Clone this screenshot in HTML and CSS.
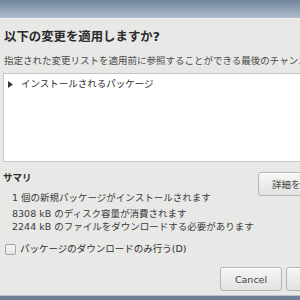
FILE: index.html
```html
<!DOCTYPE html>
<html lang="ja">
<head>
<meta charset="utf-8">
<link rel="stylesheet" href="styles.css">
</head>
<body>
<div class="titlebar"></div>
<div class="dialog">
  <h1 class="title">以下の変更を適用しますか?</h1>
  <p class="subtitle">指定された変更リストを適用前に参照することができる最後のチャンスです。</p>
  <div class="listbox">
    <div class="item">
      <svg class="expander" width="5" height="7" viewBox="0 0 5 7"><polygon points="0,0 5,3.5 0,7" fill="#3a3a3a"/></svg>
      <span>インストールされるパッケージ</span>
    </div>
  </div>
  <div class="summary">
    <div class="summary-text">
      <div class="heading">サマリ</div>
      <div class="line first">1 個の新規パッケージがインストールされます</div>
      <div class="line">8308 kB のディスク容量が消費されます</div>
      <div class="line">2244 kB のファイルをダウンロードする必要があります</div>
    </div>
    <button class="btn details">詳細を表示</button>
  </div>
  <label class="check"><span class="box"></span><span>パッケージのダウンロードのみ行う(D)</span></label>
  <div class="actions">
    <button class="btn">Cancel</button>
    <button class="btn">Apply</button>
  </div>
</div>
<div class="bottombar"></div>
</body>
</html>
```
FILE: styles.css
```css
html, body {
  margin: 0;
  padding: 0;
}
body {
  width: 300px;
  height: 300px;
  overflow: hidden;
  background: #e8e8e7;
  font-family: "DejaVu Sans", "Noto Sans CJK JP", sans-serif;
  color: #2e3436;
  display: flex;
  flex-direction: column;
}
.titlebar {
  height: 18px;
  flex: none;
  background: linear-gradient(#71849f, #b0bccd);
  border-bottom: 1px solid #f2f3f5;
}
.dialog {
  flex: 1;
  width: 345px;
  padding: 0 10px 0 3px;
  display: flex;
  flex-direction: column;
}
.title {
  margin: 10px 0 0 1px;
  font-size: 12.4px;
  line-height: 16px;
  font-weight: bold;
  color: #2c2c2c;
  white-space: nowrap;
}
.subtitle {
  margin: 9px 0 0 1px;
  font-size: 9.5px;
  line-height: 14px;
  color: #4a4a4a;
  white-space: nowrap;
}
.listbox {
  margin-top: 5px;
  height: 87px;
  background: #fff;
  border: 1px solid #c6c6c4;
}
.item {
  display: flex;
  align-items: center;
  gap: 8px;
  padding: 3px 0 0 4px;
  font-size: 9.5px;
  line-height: 14px;
  color: #2c2c2c;
}
.summary {
  display: flex;
  justify-content: space-between;
  align-items: flex-start;
  margin-top: 9px;
}
.heading {
  font-size: 9.5px;
  line-height: 14px;
  font-weight: bold;
  color: #2c2c2c;
}
.line {
  margin-left: 9px;
  font-size: 9.5px;
  line-height: 13px;
  color: #3a3a3a;
  white-space: nowrap;
}
.line.first {
  margin-top: 6px;
  margin-bottom: 3px;
}
.btn {
  font-family: "DejaVu Sans", "Noto Sans CJK JP", sans-serif;
  font-size: 9.5px;
  color: #444;
  height: 24px;
  padding: 0 12px;
  background: linear-gradient(#f6f6f5, #e2e2e0);
  border: 1px solid #b4b4b2;
  border-radius: 3px;
  box-shadow: inset 0 1px 0 #fff;
}
.details {
  margin-top: 1px;
  width: 90px;
  padding: 0 0 0 13px;
  text-align: left;
  white-space: nowrap;
}
.check {
  display: flex;
  align-items: center;
  gap: 4px;
  margin: 9px 0 0 2px;
  font-size: 9.5px;
  line-height: 14px;
  color: #2c2c2c;
}
.box {
  width: 9px;
  height: 9px;
  border: 1px solid #a5a5a3;
  border-radius: 2px;
  background: linear-gradient(#f4f4f3, #e4e4e2);
}
.actions {
  display: flex;
  justify-content: flex-end;
  gap: 4px;
  margin-top: 11px;
}
.actions .btn {
  width: 62px;
}
.bottombar {
  height: 4px;
  flex: none;
  background: #6f7f95;
  border-top: 1px solid #b9c1cc;
}
```
